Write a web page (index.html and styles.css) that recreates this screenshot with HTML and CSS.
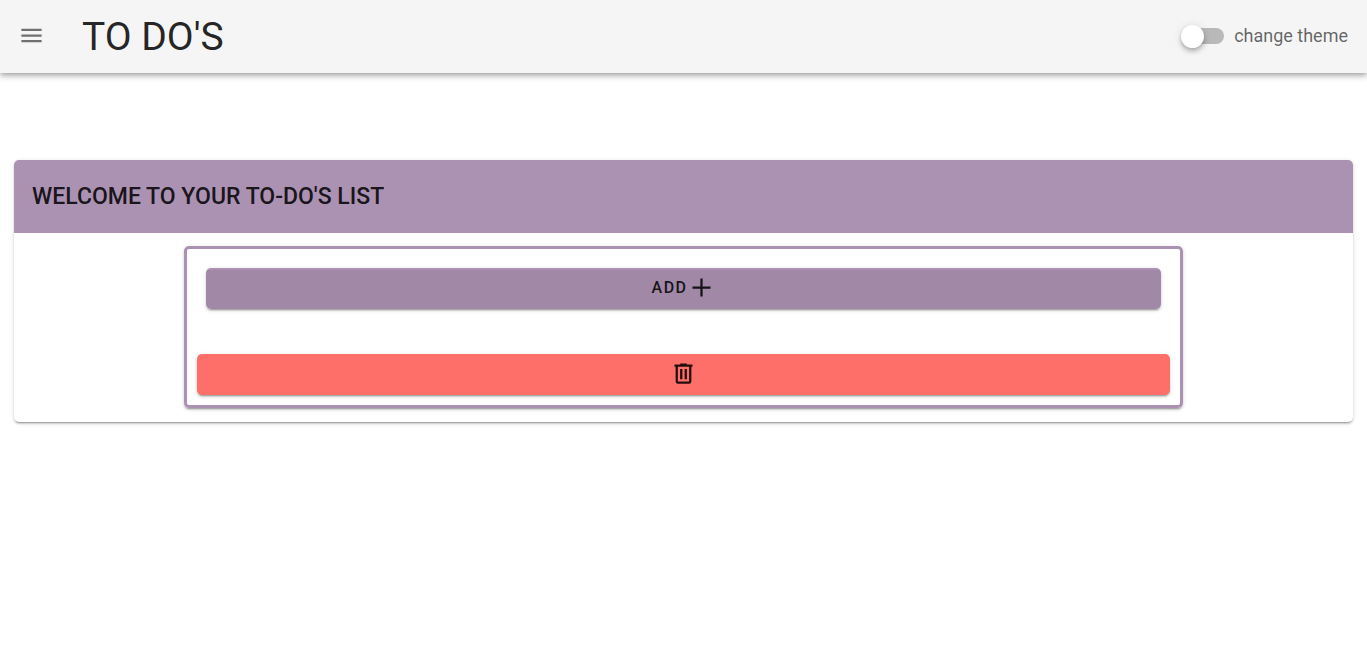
FILE: index.html
```html
<!DOCTYPE html>
<html lang="en">
<head>
<meta charset="utf-8">
<meta name="viewport" content="width=device-width, initial-scale=1">
<title>To Do's</title>
<link rel="stylesheet" href="styles.css">
</head>
<body>
<header class="app-bar">
  <button class="menu-button" type="button" aria-label="Open menu">
    <svg class="icon" viewBox="0 0 24 24" aria-hidden="true"><path d="M3 6h18v2H3V6m0 5h18v2H3v-2m0 5h18v2H3v-2z"/></svg>
  </button>
  <h1 class="app-title">TO DO'S</h1>
  <label class="theme-switch" for="theme">
    <input class="switch" id="theme" type="checkbox" role="switch">
    <span>change theme</span>
  </label>
</header>
<main class="content">
  <section class="card">
    <h2 class="card-title">WELCOME TO YOUR TO-DO'S LIST</h2>
    <div class="card-body">
      <div class="todo-panel">
        <button class="button button-add" type="button">
          <span>ADD</span>
          <svg class="icon" viewBox="0 0 24 24" aria-hidden="true"><path d="M20 13h-7v7h-2v-7H4v-2h7V4h2v7h7z"/></svg>
        </button>
        <button class="button button-delete" type="button" aria-label="Delete all">
          <svg class="icon" viewBox="0 0 24 24" aria-hidden="true"><path d="M9 3v1H4v2h1v13a2 2 0 0 0 2 2h10a2 2 0 0 0 2-2V6h1V4h-5V3H9M7 6h10v13H7V6m2 2v9h2V8H9m4 0v9h2V8h-2z"/></svg>
        </button>
      </div>
    </div>
  </section>
</main>
</body>
</html>
```
FILE: styles.css
```css
* {
  box-sizing: border-box;
}

body {
  margin: 0;
  background: #fff;
  color: rgba(0, 0, 0, 0.87);
  font-family: Roboto, sans-serif;
  font-size: 18px;
  line-height: 27px;
}

h1,
h2 {
  margin: 0;
}

button {
  border: 0;
  padding: 0;
  color: inherit;
  font: inherit;
  cursor: pointer;
}

.icon {
  display: block;
  width: 27px;
  height: 27px;
  fill: currentColor;
}

.app-bar {
  display: flex;
  align-items: center;
  height: 73px;
  padding: 0 19px 2px 18px;
  background: #f5f5f5;
  box-shadow: 0 2px 4px -1px rgba(0, 0, 0, 0.2), 0 4px 5px rgba(0, 0, 0, 0.14), 0 1px 10px rgba(0, 0, 0, 0.12);
}

.menu-button {
  background: none;
  color: rgba(0, 0, 0, 0.54);
}

.app-title {
  margin-left: 37px;
  padding-top: 4px;
  font-size: 39px;
  font-weight: 400;
  line-height: 45px;
}

.theme-switch {
  display: flex;
  align-items: center;
  gap: 10px;
  margin-left: auto;
  color: rgba(0, 0, 0, 0.6);
  cursor: pointer;
}

.switch {
  position: relative;
  appearance: none;
  width: 41px;
  height: 16px;
  margin: 0;
  border-radius: 8px;
  background: #b9b9b9;
  cursor: pointer;
}

.switch::before {
  content: "";
  position: absolute;
  top: -3px;
  left: -2px;
  width: 23px;
  height: 23px;
  border-radius: 50%;
  background: #fff;
  box-shadow: 0 2px 4px -1px rgba(0, 0, 0, 0.2), 0 4px 5px rgba(0, 0, 0, 0.14), 0 1px 10px rgba(0, 0, 0, 0.12);
}

.switch:checked::before {
  left: 20px;
}

.content {
  padding: 87px 14px 14px;
}

.card {
  border-radius: 5px;
  background: #fff;
  box-shadow: 0 3px 1px -2px rgba(0, 0, 0, 0.2), 0 2px 2px rgba(0, 0, 0, 0.14), 0 1px 5px rgba(0, 0, 0, 0.12);
}

.card-title {
  padding: 18px;
  border-radius: 5px 5px 0 0;
  background: #ab92b3;
  font-size: 23px;
  font-weight: 500;
  line-height: 37px;
}

.card-body {
  padding: 13px 12.5% 14px;
}

.todo-panel {
  display: flex;
  flex-direction: column;
  gap: 45px;
  margin: 0 3px;
  padding: 19px 10px 10px;
  border: 3px solid #ab92b3;
  border-radius: 5px;
  box-shadow: 0 3px 1px -2px rgba(0, 0, 0, 0.2), 0 2px 2px rgba(0, 0, 0, 0.14), 0 1px 5px rgba(0, 0, 0, 0.12);
}

.button {
  display: flex;
  align-items: center;
  justify-content: center;
  height: 41px;
  padding-bottom: 2px;
  border-radius: 5px;
  box-shadow: 0 3px 1px -2px rgba(0, 0, 0, 0.2), 0 2px 2px rgba(0, 0, 0, 0.14), 0 1px 5px rgba(0, 0, 0, 0.12);
}

.button-add {
  gap: 1px;
  margin: 0 9px;
  background: linear-gradient(#ab92b3 2px, #a088a6 2px);
  font-size: 16px;
  font-weight: 500;
  letter-spacing: 0.09em;
}

.button-delete {
  background: #ff6f69;
}
```
